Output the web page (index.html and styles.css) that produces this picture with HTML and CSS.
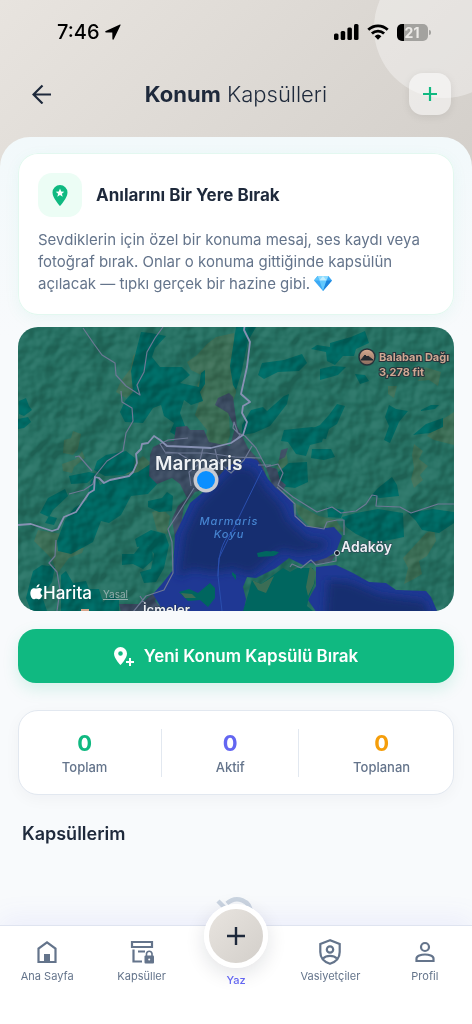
FILE: index.html
```html
<!DOCTYPE html>
<html lang="tr">
<head>
    <meta charset="UTF-8">
    <meta name="viewport" content="width=device-width, initial-scale=1.0">
    <title>Konum Kapsülleri</title>
    <link rel="stylesheet" href="styles.css">
</head>
<body>
    <header class="header">
        <div class="status">
            <div class="status-time">
                <span>7:46</span>
                <svg width="16" height="16" viewBox="0 0 16 16"><path d="M15 .6 .8 6.900c-.9.4-.7 1.500.2 1.500l6.300.1.1 6.400c0 .9 1.100 1.100 1.500.2L15.500 1.200c.2-.5-.1-.8-.5-.6z"/></svg>
            </div>
            <div class="status-icons">
                <svg width="25" height="16" viewBox="0 0 25 16"><rect x="0" y="9.500" width="4.500" height="6.500" rx="1.500"/><rect x="6.700" y="7" width="4.500" height="9" rx="1.500"/><rect x="13.400" y="3.500" width="4.500" height="12.500" rx="1.500"/><rect x="20" y="0" width="4.500" height="16" rx="1.500"/></svg>
                <svg width="22" height="16" viewBox="0 0 22 16"><g fill="none" stroke="#000" stroke-width="2.800"><path d="M1.300 5.800a14 14 0 0 1 19.400 0"/><path d="M4.900 9.600a8.800 8.800 0 0 1 12.200 0"/></g><path d="M7.600 12.200a5 5 0 0 1 6.800 0L11 15.800z"/></svg>
                <div class="battery"><span>21</span></div>
            </div>
        </div>
        <div class="header-row">
            <button class="back-btn" aria-label="Geri">
                <svg width="20" height="20" viewBox="0 0 20 20"><path d="M19 10.500H2M10.500 1.500l-9 9 9 9" fill="none" stroke="#1e293b" stroke-width="2.200"/></svg>
            </button>
            <h1 class="title"><b>Konum</b> Kapsülleri</h1>
            <button class="add-btn" aria-label="Ekle">
                <svg width="16" height="16" viewBox="0 0 16 16"><path d="M8 1v14M1 8h14" stroke="#10b981" stroke-width="2.200"/></svg>
            </button>
        </div>
    </header>

    <main class="content">
        <section class="card info">
            <div class="info-head">
                <div class="info-icon">
                    <svg width="16" height="21" viewBox="0 0 16 21"><path d="M8 0a7.500 7.500 0 0 0-7.500 7.500C.5 13 8 21 8 21s7.500-8 7.500-13.500A7.500 7.500 0 0 0 8 0z" fill="#10b981"/><path d="m8 3.600 1.200 2.900 3.100.2-2.400 2 .8 3L8 10.100l-2.700 1.600.8-3-2.400-2 3.100-.2z" fill="#fff"/></svg>
                </div>
                <h2>Anılarını Bir Yere Bırak</h2>
            </div>
            <p>Sevdiklerin için özel bir konuma mesaj, ses kaydı veya fotoğraf bırak. Onlar o konuma gittiğinde kapsülün açılacak — tıpkı gerçek bir hazine gibi.
                <svg class="gem" width="18" height="15" viewBox="0 0 18 15"><path d="M3.500 0h11L18 4.500 9 15 0 4.500z" fill="#3ba9f5"/><path d="M3.500 0h11L12.500 4.500h-7z" fill="#8fdcff"/><path d="M3.500 0 5.500 4.500H0z" fill="#5cc3fb"/><path d="M5.500 4.500h7L9 15z" fill="#62c8fd"/><path d="M12.500 4.500H18L9 15z" fill="#1d84dc"/><path d="m9 0 3.500 4.500h-7z" fill="#c4efff"/></svg>
            </p>
        </section>

        <section class="map" aria-label="Harita">
            <svg viewBox="18 327 436 284" preserveAspectRatio="xMidYMid slice">
                <defs>
                    <filter id="relief" x="0" y="0" width="100%" height="100%" color-interpolation-filters="sRGB">
                        <feTurbulence type="fractalNoise" baseFrequency="0.04" numOctaves="3" seed="8"/>
                        <feDiffuseLighting surfaceScale="7" lighting-color="#ffffff"><feDistantLight azimuth="225" elevation="30"/></feDiffuseLighting>
                    </filter>
                    <filter id="soft"><feGaussianBlur stdDeviation="5"/></filter>
                    <clipPath id="bay"><path d="M227 467l14-7 7-3 9 3 5 8 6 11 8 9 17 13 1 12 14 14 18 1 8-1 8 9-6 16-10 6-23 7-14-7-13 10-20 10-9-1-4 10 3 12-2 12H163l-10-17 8-9 12-15 2-35 15-32 17-14z"/></clipPath>
                    <clipPath id="bay2"><path d="M316 567l20-2 17 8 16 9 17 1 10 7 30 1 5 6 7 16H317l-9-13 8-14z"/></clipPath>
                    <linearGradient id="peak" x1="0" y1="0" x2="0" y2="1"><stop offset="0" stop-color="#d7ac91"/><stop offset="1" stop-color="#8a6a5d"/></linearGradient>
                </defs>

                <!-- land -->
                <rect x="18" y="327" width="436" height="284" fill="#267062"/>
                <g fill="#3b6d55">
                    <path d="M187 362l10-7 10-11 9-7 18-4 2 60-7 20 1 22-5 15-13 5-8-9 3-16-12-15 4-13-2-17 6-9-12-6z"/>
                    <path d="M140 348l8 4-2 12-11 26-9 8-10-6 5-11 10-13 2-12zM64 440l7-2 2-7 8 3-3 15-5 6-10-2zM62 464l14-5 6-8 3 7-11 9-2 6-9-2z"/>
                    <path d="M38 530l24 4 10 13 12 1-2 5-13 5-12 16-5-15-18-18zM152 512l10-3 8 7-3 18-10-3zM128 470l15-14 8 7-14 14-13 4z"/>
                    <path d="M440 421l14-9v33l-20-5-7-4zM414 444l9 7-4 8 9 7-8 9 3 5-9 8-3-9 3-11-2-13zM426 533l8-4 2 12-9 15-8 5 3 13-8 5-10 5 4-16-5-10zM281 452l5-1 2 11-5 9-6-3z"/>
                    <path d="M295 503l24 13 17 4 8 12-14-3-18 0-14-15zM425 367l16 5-3 14-9-6-11 1zM388 386l9 0-3 12-6-4z"/>
                </g>
                <!-- forest -->
                <g fill="#006660">
                    <path d="M141 332l10 1 15 3-11 12-3 9 8 10 22 0 8 8-10 8 19 4 2-14 4-3 0 14-5 8 3 9-12 4-7-5-4 13 5 13-3 13-12-7 4-9-10-7-3-11-8 3-10 15-18-1-5-10 5-11 8-9-2-21z"/>
                    <path d="M236 327h20l-8 14-7 33-5 16-3-5-3-19zM106 455l20-4 9 7-1 12-11 5-18 1-11-6 3-9zM96 475l4 10 12-6 26-7 14-9 12 3-3 14-13 14-17 2-10 19-12 8-8-2-8 21-22 12-13-3-1-10 8-21 9-12 13-8 4-19z"/>
                    <path d="M40 513l8-15 17-9 3 7-15 14-4 7zM49 516l8 2-3 7-9-2zM19 401l7-3 3 8 3 4-8 6-5-2zM18 419l10-2 3 5-7 6-6 1zM148 501l14-3 5-6 6 4-1 15-13 1-11-5zM69 476l20-4 8 2-10 9-16 1z"/>
                    <path d="M122 554l12 0 6-8 12-1 1 15-10 9-10-5-11 1zM135 539l16-9 14 4 4 11-5 23-8 14-12 1-4-11 11-3 3-15-5-9-12 2zM33 571l9-6 13 2-3 15-10 14 5 15H31l-5-13zM61 575l5-4 7 12 13-2 3 8 10 0 4 13 9-7 7 5 0 11H61z"/>
                    <path d="M262 363l22-3 18-6 5 9-8 8-21 1-14 7-6-4zM330 343l21-6 14-6 4 12-13 6-2 7-11 0-8 9-8-4-1-9-15-3 6-4 13 2zM320 369l13-3 13 1-8 8-18 5zM251 410l12-3 4 4 8-7 9-8 5-2-2 10-17 22-16 7-12 2 0-10zM337 404l8 2-8 18-8 5-3 10-8-1-5-10 7-3 9-10zM389 405l7 4 12 2-9 11-9 21-6-3 5-14-4-9z"/>
                    <path d="M284 430l28-3 13 3-3 12-12 3-4 11-10-2-8-12-7-1zM312 449l19 0 4 8-11 3-13-2zM277 473l12-10 18-1 1 20-13 6-16-2zM413 435l13-11 17-6 0 9-13 6-9 1zM421 410l10-5 8 0-4 4-14 2zM378 488l14-11 5 8 2 11-19 2-9-2zM355 374l10 1 4 6-9 3z"/>
                    <path d="M342 517l14-4 22-4 25 4 1 24-29 6-19-9-10-7zM408 513l25-4 21 3 0 11-15 10-17-3-6-9zM327 507l17 3-3 8-13-1z"/>
                </g>
                <!-- town -->
                <g fill="#3b4b61">
                    <path d="M150 455l3-8 11-5 10-1 2-14 11-1 3 4 14 0 5 12 21 4 5-18-7-15-13-8 3-7 11-5 4 4 4 29 11 22 15 17 5 18-14-2-10-12-16 4-17 15-16 4-11 14-4 25-5 7-3-19 6-13 9-8-7-14-8-6-15 6-8-8zM140 604l19-15-4 12 9 10h-43l-2-7zM304 561l17-3 15-3-5 7-16 2zM281 450l7-2-3 9-6 3zM265 465l12 4 3 11 6 5-5 8-9-9z"/>
                </g>
                <rect class="relief" x="18" y="327" width="436" height="284" filter="url(#relief)"/>

                <!-- sea -->
                <g clip-path="url(#bay)">
                    <rect x="150" y="440" width="200" height="180" fill="#1f3894"/>
                    <path d="M235 466l17 2 16 23 13 14 7 16 20 18 20 2-5 9-24 4-18-4-30 25-18-6-20 4-22-4-13 9 6-43 14-30z" fill="#182d70" filter="url(#soft)"/>
                    <path d="M262 470l-43 88-1 18 4 35M236 529q-18 10-18 47" fill="none" stroke="#2a4fae" stroke-width="1"/>
                </g>
                <g clip-path="url(#bay2)">
                    <rect x="300" y="560" width="150" height="60" fill="#1f3894"/>
                    <path d="M328 580l22 2 30 13 45 6 6 20H325z" fill="#182d70" filter="url(#soft)"/>
                </g>
                <g fill="#00665f">
                    <path d="M179 592l10-3 9 4 12-10 5 5 0 10-7 9-8-7-12 1zM257 553l9-2 12 1-4 4-16 1zM272 551l7 1-3 3-5-1zM232 572l4 3v5l-4-5z"/>
                    <path d="M252 580l9 4 22-16 7 4 7-4 16 0 2 14-6 15-2 9 6 5H243l4-13z"/>
                </g>
                <path d="M252 580l9 4 13-8-8 17-8-3zM310 566l6 6-2 12-6 12-2-9zM181 593l11 1 4 4-11 0z" fill="#3b6d55"/>

                <!-- roads -->
                <g fill="none" stroke="#6d7894" stroke-width="1.200" stroke-linejoin="round">
                    <path d="M83 328l11 16 8 11 13 8 1 12 10 11 14 9-3-10 7-13 3-20 8-14 8-11M121 391l1 11 10 6 1 13-7 12-3 18-16 10-12 15-2 8-9 6-15 4M92 471l-13-15-4 1M56 540l-1 16-6 7 8 9 3 18-3 21M177 612l-44 0 13-16 18-6 9-17-1-31-4-13 13-20 13-21M140 596l6 9"/>
                    <path d="M188 459l-10-6-13-1-5-8 8-4 20-2M203 448l-4 16-10 8 2 14M215 449l3 13 13 11 13-13 8-14M165 453l42 0 28 4 26 1"/>
                    <path d="M236 440l4-5-7-7 1-6 4 11 7 3 11 12 10 19 12-3 5 9-5 12 15 12 24 15 15-5 9 6 15-2 10-7 6-9 5 1-1 10 24 1 11 6 27-9 21 0M277 487l18 17 0 12 11 10 18 3 3-7 10-2 7 0 0 15M336 552v9l-20 4-5-5-10 8-9-4-2 3M258 465l13 0"/>
                </g>
                <g fill="none" stroke="#8791b3" stroke-width="1.800" stroke-linejoin="round">
                    <path d="M18 525l13-1 21 7 6-2 6-12 12-5 13-19 5-3 1-13 4 1 5 5 6-3 19-4 4-4 4-9-1-9 5-5 1-5 6-1 6-7 6 4 7 6 24 1 20 1 20-5 12-8 4-13-5-9 1-7 7-4-9-8 6-27 3-25-6-12 1-7"/>
                </g>

                <!-- labels -->
                <path d="M81 609h8v2h-8z" fill="#d9a58b"/>
                <g class="town-labels">
                    <text x="155" y="470" font-size="19">Marmaris</text>
                    <text x="341" y="552" font-size="14">Adaköy</text>
                    <text x="143" y="615" font-size="13">İçmeler</text>
                </g>
                <circle cx="337" cy="553" r="2.500" fill="#111827" stroke="#cbd5e1" stroke-width="1"/>
                <g class="sea-labels">
                    <text x="229" y="525">Marmaris</text>
                    <text x="229" y="538">Koyu</text>
                </g>
                <circle cx="367" cy="357" r="8" fill="url(#peak)" stroke="#27333b" stroke-width="1.500"/>
                <path d="M361 360l4-5 2 2 1-1 5 4z" fill="#252a30" stroke="#252a30" stroke-linejoin="round"/>
                <g class="peak-labels">
                    <text x="379" y="361">Balaban Dağı</text>
                    <text x="379" y="376">3,278 fit</text>
                </g>
                <circle cx="206" cy="480" r="12.500" fill="#c8cbd2"/>
                <circle cx="206" cy="480" r="9" fill="#0a8fff"/>
                <path d="M37 588.500c1-.8 4.800-1.100 5 1.500-2.200 1.300-1.800 4.400.4 5.300-.7 2-2 4-3.500 4-1 0-1.400-.6-2.600-.6s-1.600.6-2.600.6c-3.600-.5-5.200-9.800-.3-11 1.500-.3 2.400.5 3.600.2zM36.500 587.500c-.2-1.800 1.400-3.400 3-3.600.2 1.900-1.200 3.500-3 3.600z" fill="#fff"/>
                <text class="map-brand" x="43" y="599">Harita</text>
                <a href="#"><text class="map-legal" x="103" y="598">Yasal</text></a>
            </svg>
        </section>

        <button class="primary-btn">
            <svg width="20" height="19" viewBox="0 0 20 19"><path fill="#fff" fill-rule="evenodd" d="M6.500 0A6.500 6.500 0 0 0 0 6.500C0 11.500 6.500 18 6.500 18S13 11.500 13 6.500A6.500 6.500 0 0 0 6.500 0zm0 4.200a2.300 2.300 0 1 1 0 4.600 2.300 2.300 0 0 1 0-4.600z"/><path d="M16 11v8M12 15h8" stroke="#fff" stroke-width="2"/></svg>
            Yeni Konum Kapsülü Bırak
        </button>

        <section class="card stats">
            <div class="stat"><b class="green">0</b><span>Toplam</span></div>
            <div class="divider"></div>
            <div class="stat"><b class="indigo">0</b><span>Aktif</span></div>
            <div class="divider"></div>
            <div class="stat"><b class="amber">0</b><span>Toplanan</span></div>
        </section>

        <h2 class="list-title">Kapsüllerim</h2>
        <div class="empty">
            <svg width="48" height="48" viewBox="0 0 48 48" fill="none" stroke="#cbd5e1" stroke-width="4.500"><path d="m6 6 36 36"/><path d="M15 8.500C24 0 39 5 39 19c0 5-2 9-5 14M10 17c-1 11 9 20 14 26 2-2 4-4 6-7"/></svg>
        </div>
    </main>

    <nav class="tabbar">
        <a href="#" class="tab">
            <svg width="26" height="26" viewBox="0 0 26 26"><path d="M4.500 23V9.500L13 3.300l8.500 6.200V23z" fill="none" stroke="#64748b" stroke-width="2.200"/><path d="M10 15h6v8h-6z" fill="#64748b"/></svg>
            <span>Ana Sayfa</span>
        </a>
        <a href="#" class="tab">
            <svg width="26" height="26" viewBox="0 0 26 26"><g fill="none" stroke="#64748b" stroke-width="2.200"><path d="M3 3h20v5H3zM4.500 10.500V22.500H13M9 12.500h7"/></g><path d="M17.500 17v-2.500a2.800 2.800 0 0 1 5.500 0V17" fill="none" stroke="#64748b" stroke-width="1.600"/><rect x="15.500" y="16.500" width="9.500" height="8" rx="1" fill="#64748b"/><circle cx="20.200" cy="20.500" r="1" fill="#fff"/></svg>
            <span>Kapsüller</span>
        </a>
        <a href="#" class="tab active">
            <span class="fab"><svg width="18" height="18" viewBox="0 0 18 18"><path d="M9 0v18M0 9h18" stroke="#1e293b" stroke-width="2.400"/></svg></span>
            <span>Yaz</span>
        </a>
        <a href="#" class="tab">
            <svg width="26" height="26" viewBox="0 0 26 26" fill="none" stroke="#64748b" stroke-width="2.200"><path d="M13 1.200 3.300 5v8c0 6 4.200 10 9.700 11.800C18.500 23 22.700 19 22.700 13V5z"/><circle cx="13" cy="10.500" r="3.200"/><path d="M6 19.500c3.500-3.500 10.500-3.500 14 0"/></svg>
            <span>Vasiyetçiler</span>
        </a>
        <a href="#" class="tab">
            <svg width="26" height="26" viewBox="0 0 26 26" fill="none" stroke="#64748b" stroke-width="2.200"><circle cx="13" cy="8" r="4"/><path d="M4.500 22v-2.500c0-2.500 4.500-4 8.500-4s8.500 1.500 8.500 4V22z"/></svg>
            <span>Profil</span>
        </a>
    </nav>
</body>
</html>
```
FILE: styles.css
```css
* {
    box-sizing: border-box;
}
body {
    margin: 0;
    min-height: 100vh;
    display: flex;
    flex-direction: column;
    font-family: Inter, "Liberation Sans", sans-serif;
    color: #1e293b;
    background: linear-gradient(135deg, #e8e4df, #d3cfca) top / 100% 180px no-repeat #f8fafc;
}
h1, h2, p {
    margin: 0;
}
button {
    font-family: inherit;
    border: none;
    cursor: pointer;
}
svg {
    flex-shrink: 0;
}

/* header */
.header {
    position: relative;
    overflow: hidden;
    padding: 21px 21px 22px;
}
.header::before {
    content: "";
    position: absolute;
    top: -42px;
    right: -42px;
    width: 140px;
    height: 140px;
    border-radius: 50%;
    background: rgba(255, 255, 255, 0.35);
}
.status, .status-time, .status-icons, .header-row {
    position: relative;
    display: flex;
    align-items: center;
}
.status {
    justify-content: space-between;
    height: 22px;
    padding: 0 23px 0 36px;
}
.status-time {
    gap: 5px;
    font-size: 20px;
    font-weight: 500;
    color: #000;
}
.status-icons {
    gap: 8px;
}
.battery {
    position: relative;
    width: 31px;
    height: 17px;
    padding-right: 1px;
    border-radius: 5px;
    background: linear-gradient(90deg, #000 7px, #a3a29f 7px);
    color: #eceae7;
    font-size: 14px;
    font-weight: 700;
    line-height: 17px;
    text-align: center;
}
.battery::after {
    content: "";
    position: absolute;
    right: -3px;
    top: 6px;
    width: 2px;
    height: 5px;
    border-radius: 0 2px 2px 0;
    background: #a3a29f;
}
.header-row {
    justify-content: space-between;
    margin-top: 30px;
}
.back-btn, .add-btn {
    width: 42px;
    height: 42px;
    padding: 0;
    display: flex;
    align-items: center;
    justify-content: center;
    background: none;
}
.add-btn {
    border-radius: 14px;
    background: rgba(255, 255, 255, 0.5);
    box-shadow: 0 2px 8px rgba(0, 0, 0, 0.08);
}
.title {
    font-size: 22px;
    font-weight: 300;
    line-height: 28px;
}
.title b {
    font-weight: 700;
}

/* content */
.content {
    flex: 1;
    padding: 16px 18px 100px;
    border-radius: 30px 30px 0 0;
    background: linear-gradient(#f2f9fb, #f8fafc 200px);
}
.card {
    background: #fff;
    border-radius: 20px;
}
.info {
    padding: 20px;
    box-shadow: inset 0 0 0 1px #e3f8f0, 0 4px 16px rgba(16, 185, 129, 0.06);
}
.info-head {
    display: flex;
    align-items: center;
    gap: 14px;
    margin-bottom: 12px;
}
.info-icon {
    width: 44px;
    height: 44px;
    border-radius: 14px;
    background: #ecfdf5;
    display: flex;
    align-items: center;
    justify-content: center;
}
.info h2 {
    font-size: 17px;
    font-weight: 700;
}
.info p {
    font-size: 15px;
    line-height: 22px;
    color: #64748b;
}
.gem {
    vertical-align: -2px;
}

.map {
    margin-top: 12px;
    border-radius: 20px;
    overflow: hidden;
}
.map svg {
    display: block;
    width: 100%;
}
.relief {
    mix-blend-mode: soft-light;
    opacity: 0.25;
}
.town-labels {
    fill: #eef1f5;
    font-weight: 600;
    stroke: #2b3a4d;
    stroke-width: 1px;
    paint-order: stroke;
}
.sea-labels {
    fill: #4684d0;
    font-size: 11px;
    font-style: italic;
    font-weight: 500;
    letter-spacing: 1px;
    text-anchor: middle;
}
.peak-labels {
    fill: #cfa893;
    font-size: 11px;
    font-weight: 700;
    stroke: #26333a;
    stroke-width: 2px;
    paint-order: stroke;
}
.map-brand {
    fill: #fff;
    font-size: 17px;
    font-weight: 500;
}
.map-legal {
    fill: #93aead;
    font-size: 10px;
    text-decoration: underline;
}

.primary-btn {
    width: 100%;
    height: 54px;
    margin-top: 18px;
    border-radius: 18px;
    display: flex;
    align-items: center;
    justify-content: center;
    gap: 10px;
    background: #10b981;
    color: #fff;
    font-size: 17px;
    font-weight: 600;
    box-shadow: 0 6px 16px rgba(16, 185, 129, 0.15);
}

.stats {
    display: flex;
    justify-content: space-around;
    align-items: center;
    margin-top: 27px;
    padding: 17px 16px;
    border: 1px solid #e2e8f0;
    box-shadow: 0 4px 16px rgba(15, 23, 42, 0.04);
}
.stat {
    display: flex;
    flex-direction: column;
    align-items: center;
}
.stat b {
    font-size: 22px;
    line-height: 30px;
}
.stat span {
    font-size: 13px;
    font-weight: 500;
    line-height: 19px;
    color: #64748b;
}
.green { color: #10b981; }
.indigo { color: #6366f1; }
.amber { color: #f59e0b; }
.divider {
    width: 1px;
    height: 48px;
    background: #e2e8f0;
}
.list-title {
    margin: 26px 4px 0;
    font-size: 18px;
    font-weight: 600;
    line-height: 26px;
}
.empty {
    display: flex;
    justify-content: center;
    padding-top: 48px;
}

/* bottom tabs */
.tabbar {
    position: fixed;
    left: 0;
    right: 0;
    bottom: 0;
    height: 99px;
    display: flex;
    background: #fff;
    border-top: 1px solid #dfe4f0;
    box-shadow: 0 -8px 24px rgba(99, 102, 241, 0.08);
}
.tab {
    flex: 1;
    display: flex;
    flex-direction: column;
    align-items: center;
    padding-top: 13px;
    gap: 3px;
    color: #64748b;
    font-size: 11px;
    line-height: 16px;
    text-decoration: none;
}
.tab.active {
    color: #6366f1;
    font-weight: 500;
    padding-top: 0;
    gap: 4px;
}
.fab {
    width: 64px;
    height: 64px;
    margin-top: -22px;
    border: 5px solid #fff;
    border-radius: 50%;
    display: flex;
    align-items: center;
    justify-content: center;
    background: linear-gradient(135deg, #e8e4df, #d3cfca);
    box-shadow: 0 6px 20px rgba(15, 23, 42, 0.12);
}
```
